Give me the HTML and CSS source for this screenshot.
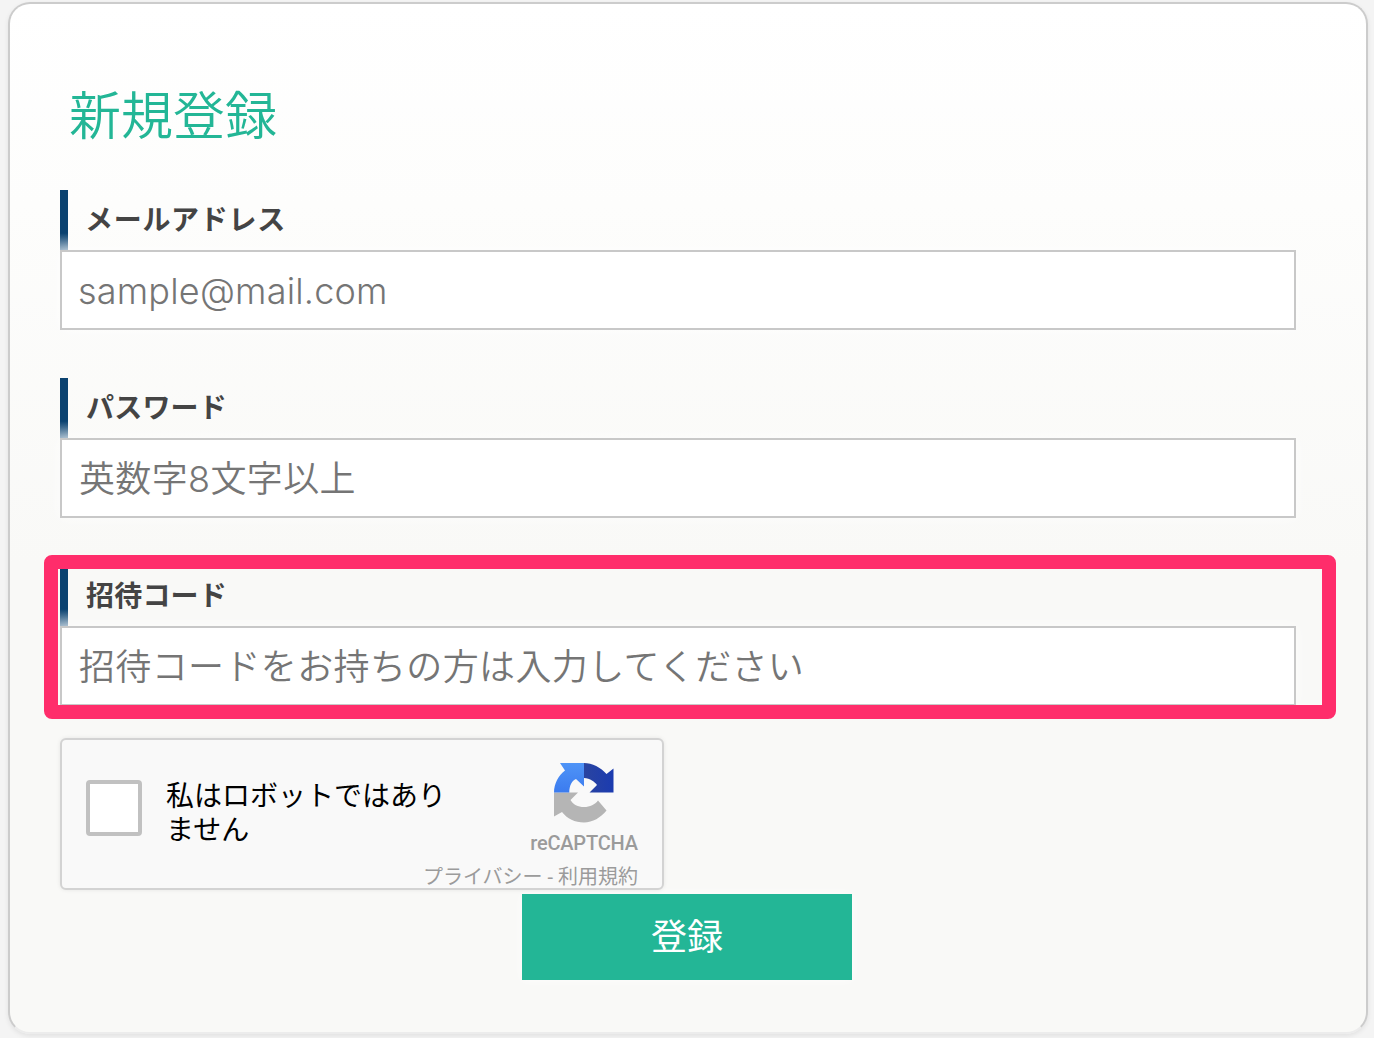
FILE: index.html
```html
<!DOCTYPE html>
<html lang="ja">
<head>
<meta charset="utf-8">
<title>新規登録</title>
<link rel="stylesheet" href="styles.css">
</head>
<body>
<main class="card">
  <h1 class="title">新規登録</h1>
  <form class="form">
    <div class="field">
      <label class="label label-long">メールアドレス</label>
      <input class="input" type="text" placeholder="sample@mail.com">
    </div>
    <div class="field">
      <label class="label">パスワード</label>
      <input class="input input-ja" type="text" placeholder="英数字8文字以上">
    </div>
    <div class="field field-last">
      <label class="label">招待コード</label>
      <input class="input input-ja" type="text" placeholder="招待コードをお持ちの方は入力してください">
    </div>
    <div class="captcha">
      <span class="check"></span>
      <p class="captcha-text">私はロボットではありません</p>
      <div class="brand">
        <svg class="logo" viewBox="0 0 60 60" width="60" height="61" aria-hidden="true">
          <defs>
            <linearGradient id="blue" x1="0" y1="0" x2="0" y2="1">
              <stop offset="0" stop-color="#4f94f7"/>
              <stop offset="1" stop-color="#3b7bef"/>
            </linearGradient>
            <linearGradient id="dark" x1="0" y1="0" x2="1" y2="0">
              <stop offset="0" stop-color="#2a44a0"/>
              <stop offset="1" stop-color="#1b3bb0"/>
            </linearGradient>
          </defs>
          <path fill="#b5b5b5" d="M0 30H24L16.5 37.500C19 42 24 44.500 30 44.500C36 44.500 41 42 44 38L52.500 48C47 55 38.500 60 30 60C21 60 13 56 8 49.500L0 54Z"/>
          <path fill="url(#blue)" d="M0 30C0 21 4.500 13 11 8L6 .5H30V24L22 16.500C18 18 15.300 23 15.300 30Z"/>
          <path fill="url(#dark)" d="M30 .5C38 .5 47 5 52.500 11.500L59.500 6V30H35.500L43 22.500C41 19.500 36 15.500 30 15.500Z"/>
        </svg>
        <span class="brand-name">reCAPTCHA</span>
      </div>
      <div class="terms">プライバシー - 利用規約</div>
    </div>
    <div class="actions">
      <button class="submit" type="button">登録</button>
    </div>
  </form>
  <div class="highlight"></div>
</main>
</body>
</html>
```

FILE: styles.css
```css
* {
  box-sizing: border-box;
}

html,
body {
  margin: 0;
  height: 100%;
}

body {
  padding: 2px 6px 4px 8px;
  background: #f4f4f4;
  font-family: "Liberation Sans", "Noto Sans CJK JP", sans-serif;
  overflow: hidden;
}

.card {
  position: relative;
  height: 1032px;
  padding: 0 0 0 50px;
  border: 2px solid #cccccc;
  border-bottom-color: #ececec;
  border-radius: 22px;
  background: linear-gradient(#ffffff 0, #fdfdfc 200px, #f9f9f7 560px);
  box-shadow: 0 2px 5px rgba(0, 0, 0, 0.08);
}

.title {
  margin: 0;
  padding: 77px 0 0 9px;
  height: 186px;
  color: #23b696;
  font-family: "Noto Sans CJK JP", sans-serif;
  font-size: 52px;
  line-height: 64px;
  font-weight: 350;
}

.form {
  width: 1236px;
}

.field {
  margin-bottom: 48px;
}

.field-last {
  margin-bottom: 32px;
}

.label {
  display: block;
  height: 60px;
  padding: 8px 0 0 26px;
  background: linear-gradient(#0b4270 0, #0b4270 72%, #8aa6bd 100%) no-repeat left top / 8px 100%;
  color: #444444;
  font-family: "Noto Sans CJK JP", sans-serif;
  font-size: 28px;
  line-height: 40px;
  font-weight: 700;
  letter-spacing: 0.2px;
}

.label-long {
  padding-left: 25px;
  letter-spacing: 0.7px;
}

.input {
  display: block;
  width: 100%;
  height: 80px;
  padding: 2px 16px 0;
  border: 2px solid #c8c8c8;
  border-radius: 0;
  background: #ffffff;
  box-shadow: 0 0 14px rgba(255, 255, 255, 0.7);
  font-family: "Inter", "Noto Sans CJK JP", sans-serif;
  font-size: 36px;
  font-weight: 350;
  letter-spacing: 0.2px;
  outline: 0;
}

.input-ja {
  padding-left: 17px;
  letter-spacing: 0.37px;
}

.input::placeholder {
  color: #757575;
  opacity: 1;
}

.captcha {
  position: relative;
  width: 604px;
  height: 152px;
  border: 2px solid #d3d3d3;
  border-radius: 6px;
  background: #f9f9f9;
  box-shadow: 0 0 4px rgba(0, 0, 0, 0.08);
}

.check {
  position: absolute;
  left: 24px;
  top: 40px;
  width: 56px;
  height: 56px;
  border: 4px solid #c1c1c1;
  border-radius: 4px;
  background: #ffffff;
}

.captcha-text {
  position: absolute;
  left: 104px;
  top: 37px;
  width: 290px;
  margin: 0;
  color: #000000;
  font-family: "Noto Sans CJK JP", sans-serif;
  font-size: 28px;
  line-height: 34px;
}

.brand {
  position: absolute;
  top: 22px;
  right: 22px;
  width: 112px;
  display: flex;
  flex-direction: column;
  align-items: center;
}

.logo {
  display: block;
}

.brand-name {
  margin-top: 6px;
  color: #9b9b9b;
  font-family: "Roboto", sans-serif;
  font-size: 20px;
  line-height: 28px;
  font-weight: 500;
  letter-spacing: -0.2px;
  white-space: nowrap;
}

.terms {
  position: absolute;
  right: 24px;
  bottom: -2px;
  color: #9b9b9b;
  font-family: "Roboto", "Noto Sans CJK JP", sans-serif;
  font-size: 20px;
  line-height: 26px;
  white-space: nowrap;
}

.actions {
  display: flex;
  justify-content: center;
  margin-top: 4px;
  padding-left: 18px;
}

.submit {
  width: 330px;
  height: 86px;
  padding: 0 0 6px;
  border: 0;
  background: #23b696;
  box-shadow: 0 0 10px rgba(255, 255, 255, 0.8);
  color: #ffffff;
  font-family: "Noto Sans CJK JP", sans-serif;
  font-size: 36px;
}

.highlight {
  position: absolute;
  left: 34px;
  top: 551px;
  width: 1292px;
  height: 164px;
  border: 14px solid #ff2d6b;
  border-radius: 8px;
  pointer-events: none;
}
```
